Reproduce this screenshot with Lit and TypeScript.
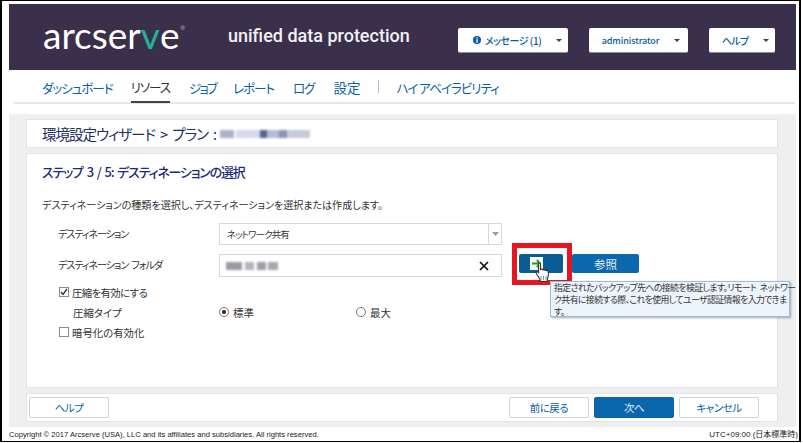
import { LitElement, html, css } from "lit";
import { customElement } from "lit/decorators.js";

const caret = html`<svg class="caret" width="6" height="3" viewBox="0 0 6 3"><path d="M0 0h6L3 3z" fill="#345"/></svg>`;

@customElement("app-root")
export class AppRoot extends LitElement {
  static styles = css`
    :host { display: block; width: 803px; height: 443px; background: #fff; overflow: hidden;
      font-family: "Noto Sans CJK JP", "Noto Sans", sans-serif; font-feature-settings: "palt"; color: #333; }
    * { box-sizing: border-box; }
    .frame { position: relative; width: 801px; height: 442px; border: solid #000; border-width: 1px 2px 1px 2px;
      padding: 3px 3px 0 7px; display: flex; flex-direction: column; }
    .header { height: 66px; background: #3b304b; display: flex; align-items: center; padding: 0 21px 0 34px; flex: none; }
    .logo { font-family: Lato, "Open Sans", sans-serif; font-size: 37px; line-height: 40px; color: #fff; width: 185px; margin-top: -5px;
      font-weight: 400; display: flex; font-feature-settings: normal; }
    .logo b { color: #1db69c; font-weight: 400; }
    .logo sup { font-size: 6px; line-height: 8px; margin: 9px 0 0 1px; color: #ccc; font-family: "Liberation Sans", sans-serif; }
    .product { font-family: Roboto, "Open Sans", sans-serif; font-size: 18px; font-weight: 500; color: #f2f1f4; margin-top: -4px; flex: 1; font-feature-settings: normal; }
    .hbtns { display: flex; gap: 21px; margin-top: 7px; }
    .hbtn { height: 25px; background: #fff; border-radius: 2px; border-bottom: 1px solid #8a8a98; color: #0a5c9e; font-size: 10px; font-weight: 500;
      display: flex; align-items: center; justify-content: center; }
    .hbtn.msg { width: 110px; gap: 15px; padding-left: 9px; letter-spacing: -.45px; }
    .hbtn.admin { width: 99px; gap: 15px; font-size: 9px; letter-spacing: -.1px; padding-left: 5px; }
    .hbtn.help { width: 66px; gap: 15px; padding-left: 7px; letter-spacing: -.8px; }
    .hbtn span { display: flex; align-items: center; gap: 4px; }
    .nav { height: 34px; margin-left: 5px; margin-right: 1px; flex: none; border-bottom: 2px solid #e6e6ea; display: flex; align-items: stretch; padding-left: 28px; font-size: 12.6px; letter-spacing: -1.1px; color: #0a5fa8; }
    .nav a { display: flex; align-items: center; margin-right: 19px; white-space: nowrap; height: 33px; padding-top: 1px; }
    .nav a.active { color: #333; border-bottom: 2px solid #444; }
    .nav a.first { margin-right: 18px; }
    .nav a.job { letter-spacing: -1.9px; margin-right: 17px; }
    .nav a.kanji { font-size: 13.5px; letter-spacing: 0; margin-right: 18px; }
    .nav .sep { width: 1px; height: 13px; background: #bbb; align-self: center; margin: 0 17px 0 0; }
    .main { margin-top: 10px; height: 313px; flex: none; background: #efefef; padding: 5px 18px 0 17px; display: flex; flex-direction: column; }
    .panel { background: #fff; border: 1px solid #dfe3ea; flex: none; }
    .p1 { height: 29px; padding-left: 15px; display: flex; align-items: center; font-size: 14.6px; letter-spacing: -1.1px; word-spacing: 3px; color: #1f2f62; gap: 4px; }
    .blur1 { width: 90px; height: 8px; margin-top: 1px; filter: blur(.8px);
      background: linear-gradient(90deg, #aab2cc 0 16%, #fff 16% 18%, #d6daea 18% 44%, #58648f 44% 52%, #b5bbd2 52% 66%, #8c94b4 66% 74%, #c6cbdc 74% 100%); }
    .p2 { margin-top: 5px; height: 235px; padding: 10px 0 0 15px; display: flex; flex-direction: column; font-size: 10.1px; }
    .title { font-size: 12.9px; line-height: 16px; height: 16px; color: #1a2b7c; letter-spacing: -1.1px; word-spacing: 2px; font-weight: 500; }
    .desc { margin-top: 17px; height: 16px; line-height: 16px; letter-spacing: -.05px; }
    .row { display: flex; align-items: flex-start; margin-left: 16px; }
    .lab { width: 161px; line-height: 22px; flex: none; letter-spacing: -1.1px; word-spacing: 2px; }
    .r1 { margin-top: 10px; height: 22px; }
    .r2 { margin-top: 9px; height: 23px; }
    .select, .input { width: 283px; height: 100%; border: 1px solid #d5d8de; display: flex; align-items: center; padding-left: 7px; flex: none; }
    .select { font-size: 9.4px; letter-spacing: -.8px; }
    .select .txt { flex: 1; }
    .select .arr { width: 13px; height: 100%; border-left: 1px solid #d5d8de; display: flex; align-items: center; justify-content: center; }
    .input { justify-content: space-between; padding-left: 6px; padding-right: 12px; }
    .blur2 { width: 52px; height: 8px; filter: blur(.8px);
      background: linear-gradient(90deg, #9a9aa2 0 30%, #fff 30% 36%, #b5b5bb 36% 54%, #fff 54% 60%, #9f9fa6 60% 76%, #fff 76% 80%, #a8a8ae 80% 100%); }
    .verify { width: 44px; height: 19px; margin-left: 17px; background: #0b5c94; border-radius: 2px; display: flex; align-items: center; padding-left: 11px; flex: none; }
    .vicon { width: 13px; height: 13px; background: #f4f7f2; display: flex; align-items: center; justify-content: center; }
    .browse { width: 67px; height: 19px; margin-left: 9px; background: #0a68ad; border-radius: 2px; color: #e4edf5; font-size: 11.5px; display: flex; align-items: center; justify-content: center; flex: none; }
    .chk { display: flex; align-items: center; gap: 3px; height: 14px; margin-left: 17px; font-size: 10.4px; }
    .box { width: 10px; height: 10px; border: 1px solid #8b8b8b; background: #fff; display: flex; align-items: center; justify-content: center; flex: none; }
    .c1 { margin-top: 8px; letter-spacing: -.6px; }
    .c3 { margin-top: 6px; }
    .type { display: flex; align-items: center; height: 14px; margin: 6px 0 0 31px; font-size: 10.4px; }
    .type .t { width: 146px; }
    .radio { display: flex; align-items: center; gap: 4px; width: 137px; font-size: 10.4px; }
    .dot { width: 10px; height: 10px; border: 1px solid #777; border-radius: 50%; background: #fff; display: flex; align-items: center; justify-content: center; flex: none; }
    .dot i { width: 4px; height: 4px; border-radius: 50%; background: #222; }
    .p3 { margin-top: 5px; height: 29px; display: flex; align-items: center; padding: 0 18px 0 2px; }
    .btn { width: 80px; height: 21px; border: 1px solid #cfd3d9; border-radius: 2px; background: #fff; color: #0a5fa8; font-size: 10.5px; letter-spacing: -.5px; display: flex; align-items: center; justify-content: center; flex: none; }
    .btn.primary { background: #0a66ac; border-color: #0a66ac; color: #e8f0f7; }
    .spacer { flex: 1; }
    .p3 .g { margin-left: 5px; }
    .footer { flex: 1; display: flex; justify-content: space-between; align-items: center; margin-right: -2px; font-family: "Liberation Sans", "Noto Sans CJK JP", sans-serif; font-size: 7.6px; color: #222; font-feature-settings: normal; }
    .footer .r { font-size: 8px; margin-top: -1px; }
    .redbox { position: absolute; left: 510px; top: 242px; width: 60px; height: 42px; border: 5px solid #e8141f; }
    .tip { position: absolute; left: 548px; top: 280px; width: 240px; height: 36px; background: #eef4fc; border: 1px solid #9dbcdd; box-shadow: 1px 1px 2px rgba(80,90,110,.5);
      padding: 0 0 0 3px; font-size: 8.9px; letter-spacing: -.6px; word-spacing: 2px; line-height: 12px; color: #333; white-space: nowrap; }
    .cursor { position: absolute; left: 533px; top: 261px; }
  `;

  render() {
    return html`<div class="frame">
      <div class="header">
        <div class="logo">arcser<b>v</b>e<sup>®</sup></div>
        <div class="product">unified data protection</div>
        <div class="hbtns">
          <div class="hbtn msg"><span><svg width="8" height="8" viewBox="0 0 8 8"><circle cx="4" cy="4" r="4" fill="#0a5c9e"/><path d="M3.4 1.3h1.4v1.2H3.4zM3.4 3.2h1.3v3.5H3.4z" fill="#fff"/></svg>メッセージ (1)</span>${caret}</div>
          <div class="hbtn admin"><span>administrator</span>${caret}</div>
          <div class="hbtn help"><span>ヘルプ</span>${caret}</div>
        </div>
      </div>
      <div class="nav">
        <a class="first">ダッシュボード</a><a class="active">リソース</a><a class="job">ジョブ</a><a>レポート</a><a>ログ</a><a class="kanji">設定</a>
        <span class="sep"></span><a>ハイ アベイラビリティ</a>
      </div>
      <div class="main">
        <div class="panel p1"><span>環境設定ウィザード &gt; プラン :</span><span class="blur1"></span></div>
        <div class="panel p2">
          <div class="title">ステップ 3 / 5: デスティネーションの選択</div>
          <div class="desc">デスティネーションの種類を選択し、デスティネーションを選択または作成します。</div>
          <div class="row r1"><div class="lab">デスティネーション</div>
            <div class="select"><span class="txt">ネットワーク共有</span><span class="arr"><svg width="7" height="4" viewBox="0 0 7 4"><path d="M0 0h7L3.5 4z" fill="#99a"/></svg></span></div></div>
          <div class="row r2"><div class="lab">デスティネーション フォルダ</div>
            <div class="input"><span class="blur2"></span><svg width="10" height="10" viewBox="0 0 10 10"><path d="M1 1l8 8M9 1l-8 8" stroke="#111" stroke-width="1.7" fill="none"/></svg></div>
            <div class="verify"><span class="vicon"><svg width="11" height="11" viewBox="0 0 11 11"><path d="M1 5.500h8M5.800 2l3.400 3.500L5.800 9" stroke="#2f9a2c" stroke-width="1.800" fill="none"/></svg></span></div>
            <div class="browse">参照</div></div>
          <div class="chk c1"><span class="box"><svg width="8" height="8" viewBox="0 0 8 8"><path d="M1 4l2 2.400L7 1" stroke="#333" stroke-width="1.400" fill="none"/></svg></span>圧縮を有効にする</div>
          <div class="type"><span class="t">圧縮タイプ</span>
            <span class="radio"><span class="dot"><i></i></span>標準</span>
            <span class="radio"><span class="dot"></span>最大</span></div>
          <div class="chk c3"><span class="box"></span>暗号化の有効化</div>
        </div>
        <div class="panel p3">
          <div class="btn">ヘルプ</div><div class="spacer"></div>
          <div class="btn">前に戻る</div><div class="btn primary g">次へ</div><div class="btn g">キャンセル</div>
        </div>
      </div>
      <div class="footer"><span>Copyright © 2017 Arcserve (USA), LLC and its affiliates and subsidiaries. All rights reserved.</span><span class="r">UTC+09:00 (日本標準時)</span></div>
      <div class="redbox"></div>
      <div class="tip">指定されたバックアップ先への接続を検証します。リモート ネットワー<br>ク共有に接続する際、これを使用してユーザ認証情報を入力できま<br>す。</div>
      <svg class="cursor" width="15" height="21" viewBox="0 0 15 21"><path d="M3.500 1.200c.9-.7 2-.2 2 1v5.300c1-.6 2-.4 2.500.4 1-.5 2-.3 2.500.6 1-.4 2.300 0 2.700 1.200.5 2 .3 4.500-.6 6.500l-.6 3.300H5.500L4.800 17 1.300 11.500c-.6-1.100.8-2.200 1.900-1.300l.4.400z" fill="#fff" stroke="#333" stroke-width="1.100"/><path d="M6 14v4M8.500 14v4M11 14v4" stroke="#777" stroke-width=".8"/></svg>
    </div>`;
  }
}
